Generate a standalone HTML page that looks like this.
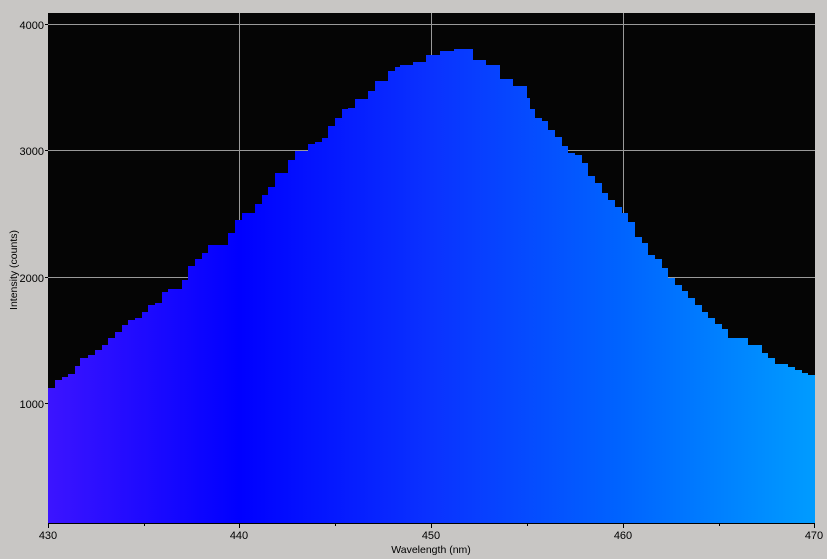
<!DOCTYPE html>
<html><head><style>
body{margin:0;width:827px;height:559px;background:#c8c6c4;overflow:hidden;font-family:"Liberation Sans",sans-serif}
</style></head><body>
<svg width="827" height="559" xmlns="http://www.w3.org/2000/svg" style="position:absolute;left:0;top:0">
<defs>
<linearGradient id="g" x1="48" x2="815" y1="0" y2="0" gradientUnits="userSpaceOnUse">
<stop offset="0" stop-color="#3c14ff"/>
<stop offset="0.25" stop-color="#0000ff"/>
<stop offset="0.5" stop-color="#0a32ff"/>
<stop offset="0.75" stop-color="#0064ff"/>
<stop offset="1" stop-color="#009cff"/>
</linearGradient>
</defs>
<rect x="48" y="13" width="767" height="510" fill="#050505"/>
<g stroke="#9a9a9a" stroke-width="1">
<line x1="48" x2="815" y1="24.5" y2="24.5"/><line x1="48" x2="815" y1="150.5" y2="150.5"/>
<line x1="48" x2="815" y1="277.5" y2="277.5"/><line x1="48" x2="815" y1="403.5" y2="403.5"/>
<line x1="239.5" x2="239.5" y1="13" y2="523"/><line x1="431.5" x2="431.5" y1="13" y2="523"/><line x1="623.5" x2="623.5" y1="13" y2="523"/>
</g>
<path fill="url(#g)" d="M48 523 V388 H55 V380 H62 V377 H68 V374 H75 V366 H80 V358 H88 V355 H95 V350 H102 V345 H108 V338 H115 V332 H122 V325 H128 V320 H135 V318 H142 V312 H148 V305 H155 V303 H162 V292 H168 V289 H182 V280 H188 V266 H195 V259 H202 V253 H208 V245 H228 V233 H235 V220 H242 V213 H255 V204 H262 V195 H268 V187 H275 V173 H288 V160 H295 V151 H308 V144 H315 V142 H322 V138 H328 V126 H335 V118 H342 V109 H348 V108 H355 V99 H368 V91 H375 V81 H388 V71 H395 V67 H400 V65 H413 V62 H426 V55 H440 V51 H454 V49 H473 V60 H486 V65 H500 V79 H513 V86 H527 V98 H530 V109 H535 V118 H542 V121 H548 V130 H555 V137 H562 V146 H568 V153 H575 V155 H582 V163 H588 V176 H595 V183 H602 V193 H608 V200 H615 V207 H622 V213 H628 V222 H635 V237 H642 V243 H648 V255 H655 V259 H662 V268 H668 V278 H675 V285 H682 V291 H688 V298 H695 V305 H702 V312 H708 V318 H715 V324 H722 V329 H728 V338 H748 V345 H762 V353 H768 V358 H775 V364 H788 V367 H795 V370 H802 V373 H808 V375 H815 V523 Z"/>
<g stroke="#000" stroke-width="1">
<line x1="48" x2="815" y1="523.5" y2="523.5"/>
<line x1="48.5" x2="48.5" y1="523" y2="528"/><line x1="239.5" x2="239.5" y1="523" y2="528"/><line x1="431.5" x2="431.5" y1="523" y2="528"/><line x1="623.5" x2="623.5" y1="523" y2="528"/><line x1="814.5" x2="814.5" y1="523" y2="528"/>
<line x1="144.5" x2="144.5" y1="523" y2="526"/><line x1="335.5" x2="335.5" y1="523" y2="526"/><line x1="527.5" x2="527.5" y1="523" y2="526"/><line x1="719.5" x2="719.5" y1="523" y2="526"/>
<line x1="45" x2="48" y1="24.5" y2="24.5"/><line x1="45" x2="48" y1="150.5" y2="150.5"/><line x1="45" x2="48" y1="277.5" y2="277.5"/><line x1="45" x2="48" y1="403.5" y2="403.5"/>
</g>
<g font-size="11" fill="#000" font-family="Liberation Sans, sans-serif">
<text x="44" y="29" text-anchor="end">4000</text>
<text x="44" y="155" text-anchor="end">3000</text>
<text x="44" y="282" text-anchor="end">2000</text>
<text x="44" y="408" text-anchor="end">1000</text>
<text x="48" y="539" text-anchor="middle">430</text>
<text x="239" y="539" text-anchor="middle">440</text>
<text x="431" y="539" text-anchor="middle">450</text>
<text x="623" y="539" text-anchor="middle">460</text>
<text x="814" y="539" text-anchor="middle">470</text>
<text x="431" y="553" text-anchor="middle" font-size="10.5">Wavelength (nm)</text>
<text transform="translate(17,270) rotate(-90)" text-anchor="middle" font-size="10.5">Intensity (counts)</text>
</g>
</svg>
</body></html>
